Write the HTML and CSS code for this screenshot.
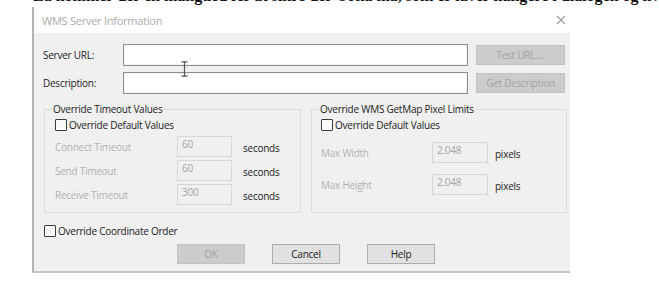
FILE: index.html
```html
<!DOCTYPE html>
<html lang="da">

<head>
    <meta charset="UTF-8">
    <title>WMS Server Information</title>
    <link rel="stylesheet" href="styles.css">
</head>

<body>
    <div class="doc-line">
        <p>La nommer der en mangued fer at sikre der Orka ma, som er laver nangere i dialogen og hvor</p>
    </div>

    <div class="dialog">
        <div class="titlebar">
            <span class="titlebar__text">WMS Server Information</span>
            <svg class="titlebar__close" width="10" height="10" viewBox="0 0 10 10">
                <path d="M1 1 L9 9 M9 1 L1 9" stroke="#9a9a9a" stroke-width="1.1" />
            </svg>
        </div>

        <div class="client">
            <div class="server-grid">
                <label class="lbl">Server URL:</label>
                <span class="field field--on"></span>
                <span class="btn btn--off">Test URL....</span>

                <label class="lbl">Description:</label>
                <span class="field field--on"></span>
                <span class="btn btn--off">Get Description</span>
            </div>

            <div class="groups">
                <fieldset class="group group--timeout">
                    <legend>Override Timeout Values</legend>
                    <div class="group__body">
                        <div class="check-row">
                            <span class="check"></span>
                            <span>Override Default Values</span>
                        </div>
                        <div class="value-rows value-rows--timeout">
                            <span class="lbl lbl--off">Connect Timeout</span>
                            <span class="field field--off">60</span>
                            <span class="unit">seconds</span>

                            <span class="lbl lbl--off">Send Timeout</span>
                            <span class="field field--off">60</span>
                            <span class="unit">seconds</span>

                            <span class="lbl lbl--off">Receive Timeout</span>
                            <span class="field field--off">300</span>
                            <span class="unit">seconds</span>
                        </div>
                    </div>
                </fieldset>

                <fieldset class="group group--pixels">
                    <legend>Override WMS GetMap Pixel Limits</legend>
                    <div class="group__body">
                        <div class="check-row">
                            <span class="check"></span>
                            <span>Override Default Values</span>
                        </div>
                        <div class="value-rows value-rows--pixels">
                            <span class="lbl lbl--off">Max Width</span>
                            <span class="field field--off">2.048</span>
                            <span class="unit">pixels</span>

                            <span class="lbl lbl--off">Max Height</span>
                            <span class="field field--off">2.048</span>
                            <span class="unit">pixels</span>
                        </div>
                    </div>
                </fieldset>
            </div>

            <div class="check-row check-row--order">
                <span class="check"></span>
                <span>Override Coordinate Order</span>
            </div>

            <div class="actions">
                <span class="btn btn--off">OK</span>
                <span class="btn">Cancel</span>
                <span class="btn">Help</span>
            </div>
        </div>
    </div>

    <!-- text cursor hovering over the URL box -->
    <svg class="ibeam" width="7" height="16" viewBox="0 0 7 16">
        <path d="M0.5 0.8 H6.5 M3.5 0.8 V15.2 M0.5 15.2 H6.5" stroke="#555" stroke-width="1.2" fill="none" />
    </svg>
</body>

</html>
```

FILE: styles.css
```css
:root {
    --ff-ui: 'Open Sans', 'Noto Sans', sans-serif;
    --clr-text: #222;
    --clr-muted: #b0b0b0;
    --clr-face: #f0f0f0;
    --clr-frame: #b4b4b4;
}

* {
    margin: 0;
    padding: 0;
    box-sizing: border-box;
}

body {
    background: #fff;
    font-family: var(--ff-ui);
    font-size: 10px;
    letter-spacing: -0.25px;
    color: var(--clr-text);
    position: relative;
    width: 659px;
    height: 295px;
    overflow: hidden;
}

/* the cut-off line of the document above the dialog */
.doc-line {
    height: 7px;
    overflow: hidden;
    padding-left: 33px;
}

.doc-line p {
    margin-top: -12px;
    font-family: 'Liberation Serif', serif;
    font-weight: bold;
    font-size: 16px;
    line-height: 16px;
    letter-spacing: 0;
    white-space: nowrap;
    color: #111;
}

.dialog {
    margin-left: 32px;
    width: 538px;
    border-left: 2px solid var(--clr-frame);
    border-bottom: 2px solid #c4c4c4;
}

.titlebar {
    height: 26px;
    display: flex;
    align-items: center;
    justify-content: space-between;
    padding: 0 4px 0 8px;
    background: #fff;
}

.titlebar__text {
    color: #ababab;
    font-size: 11px;
}

.client {
    height: 238px;
    background: var(--clr-face);
    padding: 11px 0 0 9px;
}

.server-grid {
    display: grid;
    grid-template-columns: 72px 345px 89px;
    grid-auto-rows: 22px;
    column-gap: 8px;
    row-gap: 6px;
    align-items: center;
}

.lbl {
    white-space: nowrap;
}

.lbl--off {
    color: var(--clr-muted);
}

.field {
    display: block;
    height: 100%;
    padding: 1px 4px;
    line-height: 12px;
}

.field--on {
    background: #fff;
    border: 1px solid #8e8e8e;
    box-shadow: inset 0 0 0 1px #f4f4f4;
}

.field--off {
    background: var(--clr-face);
    border: 1px solid #d6d6d6;
    color: #a4a4a4;
}

.btn {
    display: flex;
    align-items: center;
    justify-content: center;
    height: 20px;
    background: #e1e1e1;
    border: 1px solid #adadad;
    color: var(--clr-text);
}

.btn--off {
    background: #cccccc;
    border-color: #c2c2c2;
    color: #a2a2a2;
}

.groups {
    display: flex;
    gap: 10px;
    margin: 9px 0 0 1px;
}

.group {
    border: 1px solid #dcdcdc;
    min-width: 0;
}

.group--timeout {
    width: 257px;
}

.group--pixels {
    width: 256px;
}

.group legend {
    margin-left: 7px;
    padding: 0 1px;
    line-height: 12px;
}

.group__body {
    padding: 4px 0 7px 10px;
}

.group--pixels .group__body {
    padding-left: 9px;
}

.check-row {
    display: flex;
    align-items: center;
    gap: 2px;
    height: 12px;
    white-space: nowrap;
}

.check {
    width: 12px;
    height: 12px;
    border: 1px solid #3a3a3a;
    border-radius: 1px;
    background: #fafafa;
}

.value-rows {
    display: grid;
    align-items: center;
}

.value-rows--timeout {
    grid-template-columns: 111px 55px auto;
    grid-auto-rows: 21px;
    row-gap: 3px;
    column-gap: 11px;
    margin-top: 5px;
}

.value-rows--pixels {
    grid-template-columns: 104px 56px auto;
    grid-auto-rows: 21px;
    row-gap: 11px;
    column-gap: 7px;
    margin-top: 11px;
}

.unit {
    padding-top: 2px;
}

.check-row--order {
    margin: 12px 0 0 1px;
}

.actions {
    display: flex;
    gap: 27px;
    margin: 7px 0 0 134px;
}

.actions .btn {
    width: 68px;
}

.ibeam {
    position: absolute;
    left: 181px;
    top: 61px;
}
```
